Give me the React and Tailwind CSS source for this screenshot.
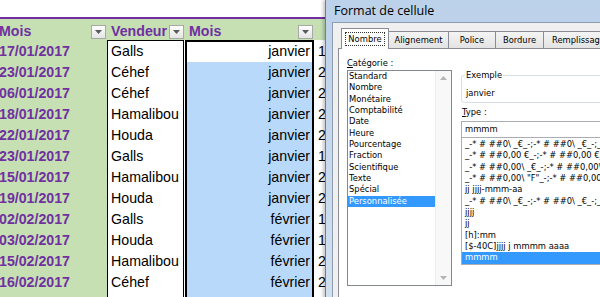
import React from "react";

const rows = [
  ["17/01/2017", "Galls", "janvier", "1"],
  ["23/01/2017", "Céhef", "janvier", "2"],
  ["06/01/2017", "Céhef", "janvier", "2"],
  ["18/01/2017", "Hamalibou", "janvier", "2"],
  ["22/01/2017", "Houda", "janvier", "2"],
  ["23/01/2017", "Galls", "janvier", "1"],
  ["15/01/2017", "Hamalibou", "janvier", "2"],
  ["19/01/2017", "Houda", "janvier", "2"],
  ["02/02/2017", "Galls", "février", "1"],
  ["03/02/2017", "Houda", "février", "1"],
  ["15/02/2017", "Hamalibou", "février", "2"],
  ["16/02/2017", "Céhef", "février", "2"],
  ["", "", "", ""],
];

const categories = [
  "Standard",
  "Nombre",
  "Monétaire",
  "Comptabilité",
  "Date",
  "Heure",
  "Pourcentage",
  "Fraction",
  "Scientifique",
  "Texte",
  "Spécial",
  "Personnalisée",
];

const types = [
  '_-* # ##0\\ _€_-;-* # ##0\\ _€_-;_-* "-"\\ _€_-;_-@_-',
  '_-* # ##0,00 €_-;-* # ##0,00 €_-;_-* "-"?? €_-;_-@_-',
  '_-* # ##0,00\\ _€_-;-* # ##0,00\\ _€_-;_-* "-"??\\ _€_-;_-@_-',
  '_-* # ##0,00\\ "F"_-;-* # ##0,00\\ "F"_-;_-* "-"??\\ "F"_-;_-@_-',
  "jj jjjj-mmm-aa",
  '_-* # ##0\\ _€_-;-* # ##0\\ _€_-;_-* "-"??\\ _€_-;_-@_-',
  "jjjj",
  "jj",
  "[h]:mm",
  "[$-40C]jjjj j mmmm aaaa",
  "mmmm",
];

function Drop() {
  return (
    <div className="w-[15px] h-[14px] shrink-0 border border-[#a9a9a9] bg-linear-to-b from-white to-[#e4e4e4] flex items-center justify-center">
      <svg width="7" height="4" viewBox="0 0 7 4">
        <path d="M0 0h7L3.5 4z" fill="#5a5a5a" />
      </svg>
    </div>
  );
}

const sheetFont = { fontFamily: '"Liberation Sans", Arial, sans-serif' };
const dlgFont = { fontFamily: '"DejaVu Sans", Verdana, sans-serif' };

function Sheet() {
  return (
    <div className="w-[330px] text-[14.2px] text-black" style={sheetFont}>
      <div className="h-[17px]" />
      <div className="h-[2px] bg-[#7030a0]" />
      <div className="flex h-[21px] bg-[#c6e0b4] text-[#7030a0] font-bold">
        <div className="w-[107px] flex items-center justify-between pr-[1px] pt-[5px]">
          <span className="-ml-[1px]">Mois</span>
          <Drop />
        </div>
        <div className="w-[78px] flex items-center justify-between pl-[4px] pr-[1px] pt-[5px]">
          <span>Vendeur</span>
          <Drop />
        </div>
        <div className="w-[129px] flex items-center justify-between pl-[4px] pr-[1px] pt-[5px]">
          <span>Mois</span>
          <Drop />
        </div>
      </div>
      <div className="flex">
        <div className="w-[107px] shrink-0 bg-[#c6e0b4] pt-[1px] text-[#7030a0] font-bold">
          {rows.map((r, i) => (
            <div key={i} className="h-[21px] flex items-center -ml-[1px]">
              {r[0]}
            </div>
          ))}
        </div>
        <div className="w-[77px] shrink-0 border-x border-t border-black bg-white">
          {rows.map((r, i) => (
            <div key={i} className="h-[21px] flex items-center pl-[3px]">
              {r[1]}
            </div>
          ))}
        </div>
        <div className="w-[1px] shrink-0" />
        <div className="w-[129px] shrink-0 border-x-2 border-t-2 border-black">
          {rows.map((r, i) => (
            <div
              key={i}
              className={
                "flex items-center justify-end pr-[2px] " +
                (i === 0 ? "h-[20px] bg-white" : "h-[21px] bg-[#b9d9fb]")
              }
            >
              {r[2]}
            </div>
          ))}
        </div>
        <div className="flex-1 pt-[1px] pl-[4px]">
          {rows.map((r, i) => (
            <div key={i} className="h-[21px] flex items-center">
              {r[3]}
            </div>
          ))}
        </div>
      </div>
    </div>
  );
}

function Underlined({ first, rest }) {
  return (
    <span>
      <span className="underline underline-offset-[1px]">{first}</span>
      {rest}
    </span>
  );
}

function Dialog() {
  return (
    <div className="absolute left-[325px] top-0 w-[320px] h-[330px] border-l border-[#6f7d8e] bg-linear-to-b from-[#bcd1ea] via-[#c9daee] to-[#d4e2f1] shadow-[-2px_0_3px_rgba(0,0,0,0.22)]">
      <div
        className="h-[22px] flex items-center pl-[8px] text-[12.5px] text-black"
        style={{ fontFamily: '"Open Sans", sans-serif' }}
      >
        Format de cellule
      </div>
      <div
        className="ml-[6px] h-[320px] border-l border-t border-[#8e9cb0] bg-[#f0f0f0] pl-[5px] pt-[5px] text-[8.4px] text-black"
        style={dlgFont}
      >
        <div className="flex items-end h-[20px] pl-[3px]">
          <div className="relative z-10 -mb-[1px] h-[21px] w-[48px] shrink-0 border border-b-0 border-[#898c95] bg-white flex items-center justify-center">
            <span className="border border-dotted border-[#333] px-[2px] leading-[12px]">Nombre</span>
          </div>
          <div className="h-[17px] w-[60px] shrink-0 border-t border-r border-[#898c95] bg-linear-to-b from-[#f4f4f4] to-[#e3e3e3] flex items-center justify-center">
            Alignement
          </div>
          <div className="h-[17px] w-[47px] shrink-0 border-t border-r border-[#898c95] bg-linear-to-b from-[#f4f4f4] to-[#e3e3e3] flex items-center justify-center">
            Police
          </div>
          <div className="h-[17px] w-[48px] shrink-0 border-t border-r border-[#898c95] bg-linear-to-b from-[#f4f4f4] to-[#e3e3e3] flex items-center justify-center">
            Bordure
          </div>
          <div className="h-[17px] w-[80px] shrink-0 border-t border-r border-[#898c95] bg-linear-to-b from-[#f4f4f4] to-[#e3e3e3] flex items-center pl-[8px]">
            Remplissage
          </div>
        </div>
        <div className="h-[300px] border border-[#898c95] bg-white flex pl-[8px] pt-[7px] gap-[9px]">
          <div className="w-[105px] shrink-0 flex flex-col">
            <div className="h-[14px] leading-[14px]">
              <Underlined first="C" rest="atégorie :" />
            </div>
            <div className="h-[216px] border border-[#828790] flex">
              <div className="flex-1">
                {categories.map((c, i) => (
                  <div
                    key={c}
                    className={
                      "h-[11.33px] leading-[11.33px] pl-[1px] whitespace-nowrap " +
                      (i === categories.length - 1 ? "bg-[#3399ff] text-white" : "")
                    }
                  >
                    {c}
                  </div>
                ))}
              </div>
              <div className="w-[16px] bg-[#f8f8f8] border-l border-[#ececec] flex flex-col justify-between items-center py-[5px]">
                <svg width="7" height="4" viewBox="0 0 7 4">
                  <path d="M0 4h7L3.5 0z" fill="#b5b5b5" />
                </svg>
                <svg width="7" height="4" viewBox="0 0 7 4">
                  <path d="M0 0h7L3.5 4z" fill="#b5b5b5" />
                </svg>
              </div>
            </div>
          </div>
          <div className="w-[200px] shrink-0 flex flex-col">
            <fieldset className="mt-[13px] border border-[#d5dfe5] rounded-[3px] pl-[4px] pb-[3px]">
              <legend className="ml-[-1px] px-[1px] leading-[12px]">Exemple</legend>
              <div className="h-[12px] leading-[12px] mt-[6px]">janvier</div>
            </fieldset>
            <div className="h-[12px] leading-[12px] mt-[3px] pl-[1px]">
              <Underlined first="T" rest="ype :" />
            </div>
            <div className="mt-[3px] h-[17px] border border-[#abadb3] pl-[3px] flex items-center">
              mmmm
            </div>
            <div className="h-[127px] border border-t-0 border-[#abadb3] pt-[1px] overflow-hidden">
              {types.map((t, i) => (
                <div
                  key={i}
                  className={
                    "h-[11.33px] leading-[11.33px] pl-[3px] whitespace-nowrap " +
                    (i === types.length - 1 ? "bg-[#3399ff] text-white" : "")
                  }
                >
                  {t}
                </div>
              ))}
            </div>
          </div>
        </div>
      </div>
    </div>
  );
}

export default function App() {
  return (
    <div className="w-[600px] h-[297px] relative overflow-hidden bg-white">
      <Sheet />
      <Dialog />
    </div>
  );
}
